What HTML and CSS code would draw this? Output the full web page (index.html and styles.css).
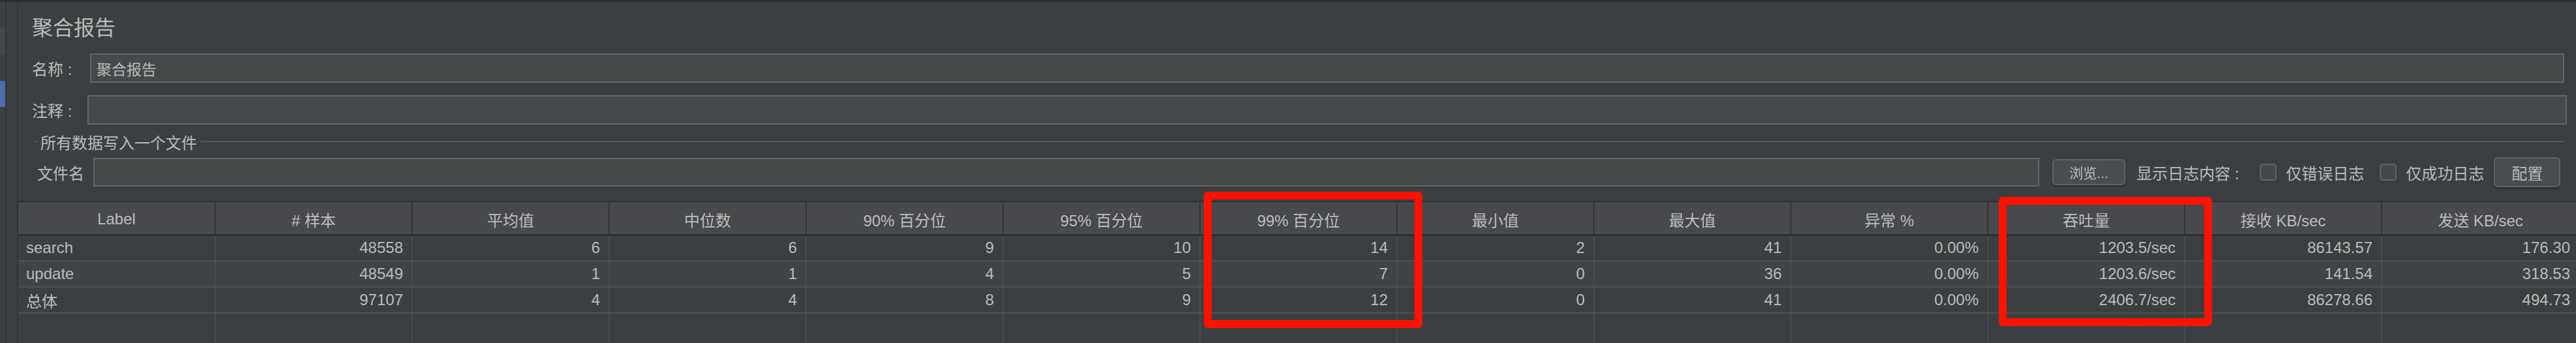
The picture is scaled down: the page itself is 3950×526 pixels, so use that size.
FILE: index.html
```html
<!DOCTYPE html>
<html lang="zh-CN">
<head>
<meta charset="utf-8">
<title>聚合报告</title>
<link rel="stylesheet" href="styles.css">
</head>
<body>
<div class="app">
  <div class="topbar"></div>
  <div class="workspace">
    <aside class="tree">
      <div class="tree-row"></div>
      <div class="tree-row hover"></div>
      <div class="tree-row"></div>
      <div class="tree-row selected"></div>
    </aside>
    <div class="gutter"></div>
    <main class="panel">
      <h1 class="title">聚合报告</h1>
      <div class="field field-name">
        <label class="field-label">名称 :</label>
        <div class="input">聚合报告</div>
      </div>
      <div class="field field-comment">
        <label class="field-label">注释 :</label>
        <div class="input"></div>
      </div>
      <div class="group-title">
        <span class="group-tick"></span>
        <span class="group-text">所有数据写入一个文件</span>
        <span class="group-line"></span>
      </div>
      <div class="file-row">
        <label class="file-label">文件名</label>
        <div class="input file-input"></div>
        <button class="btn btn-browse">浏览...</button>
        <span class="log-label">显示日志内容 :</span>
        <span class="check"><span class="box"></span>仅错误日志</span>
        <span class="check"><span class="box"></span>仅成功日志</span>
        <button class="btn btn-config">配置</button>
      </div>
      <table class="grid">
        <thead>
          <tr>
            <th>Label</th><th># 样本</th><th>平均值</th><th>中位数</th><th>90% 百分位</th><th>95% 百分位</th><th>99% 百分位</th><th>最小值</th><th>最大值</th><th>异常 %</th><th>吞吐量</th><th>接收 KB/sec</th><th>发送 KB/sec</th>
          </tr>
        </thead>
        <tbody>
          <tr>
            <td class="txt">search</td><td>48558</td><td>6</td><td>6</td><td>9</td><td>10</td><td>14</td><td>2</td><td>41</td><td>0.00%</td><td>1203.5/sec</td><td>86143.57</td><td>176.30</td>
          </tr>
          <tr class="alt">
            <td class="txt">update</td><td>48549</td><td>1</td><td>1</td><td>4</td><td>5</td><td>7</td><td>0</td><td>36</td><td>0.00%</td><td>1203.6/sec</td><td>141.54</td><td>318.53</td>
          </tr>
          <tr>
            <td class="txt">总体</td><td>97107</td><td>4</td><td>4</td><td>8</td><td>9</td><td>12</td><td>0</td><td>41</td><td>0.00%</td><td>2406.7/sec</td><td>86278.66</td><td>494.73</td>
          </tr>
          <tr class="filler">
            <td></td><td></td><td></td><td></td><td></td><td></td><td></td><td></td><td></td><td></td><td></td><td></td><td></td>
          </tr>
        </tbody>
      </table>
    </main>
  </div>
  <div class="mark mark-p99"></div>
  <div class="mark mark-tps"></div>
</div>
</body>
</html>
```

FILE: styles.css
```css
* { box-sizing: border-box; }
html, body { margin: 0; padding: 0; }
body {
  width: 3950px;
  height: 526px;
  overflow: hidden;
  background: #3c3f41;
  color: #bbbbbb;
  font-family: "Liberation Sans", "Noto Sans CJK SC", sans-serif;
  font-size: 24px;
}
.app {
  position: relative;
  width: 3950px;
  height: 526px;
  overflow: hidden;
}
.topbar {
  height: 3px;
  background: #2c2e2f;
}
.workspace {
  display: flex;
  height: 523px;
}
.tree {
  width: 8px;
  background: #3d4042;
  display: flex;
  flex-direction: column;
}
.tree-row { height: 40px; }
.tree-row:first-child { height: 41px; }
.tree-row.hover { background: #45484a; }
.tree-row.selected { background: #4b6eaf; }
.gutter {
  width: 20px;
  border-left: 2px solid #323436;
  border-right: 2px solid #323436;
  background: #3c3f41;
}
.panel {
  flex: 1;
  min-width: 0;
  display: flex;
  flex-direction: column;
}
.title {
  margin: 20px 0 0 21px;
  font-size: 32px;
  font-weight: normal;
  line-height: 40px;
  height: 40px;
}
.field {
  display: flex;
  align-items: center;
  margin-top: 19px;
  padding-left: 21px;
}
.field-label { white-space: nowrap; }
.field-name .field-label { width: 89px; }
.field-comment .field-label { width: 85px; }
.input {
  height: 45px;
  background: #45494a;
  border: 2px solid #636567;
  padding-left: 8px;
  display: flex;
  align-items: center;
  font-size: 23px;
}
.field-name .input { width: 3794px; }
.field-comment .input { width: 3802px; }
.group-title {
  display: flex;
  align-items: center;
  height: 26px;
  margin-top: 13px;
  padding-left: 25px;
  width: 3904px;
}
.group-tick {
  width: 6px;
  height: 2px;
  background: #55585a;
  margin-right: 3px;
}
.group-text { font-size: 24px; white-space: nowrap; }
.group-line {
  flex: 1;
  height: 2px;
  background: #55585a;
  margin-left: 6px;
}
.file-row {
  display: flex;
  align-items: center;
  margin-top: 11px;
  padding-left: 29px;
  height: 46px;
  white-space: nowrap;
}
.file-label { width: 86px; }
.file-input {
  width: 2984px;
  height: 44px;
}
.btn {
  font-family: inherit;
  color: #bbbbbb;
  background: #494d4f;
  border: 2px solid #5e6264;
  border-radius: 6px;
  box-shadow: 0 3px 2px #2f3133;
  padding: 0;
}
.btn-browse {
  width: 112px;
  height: 40px;
  margin-left: 20px;
  font-size: 21px;
}
.log-label { margin-left: 17px; }
.check {
  display: flex;
  align-items: center;
  margin-left: 32px;
}
.check + .check { margin-left: 24px; }
.box {
  width: 26px;
  height: 26px;
  border: 2px solid #5e6264;
  border-radius: 5px;
  background: #43484a;
  margin-right: 14px;
}
.btn-config {
  width: 102px;
  height: 46px;
  margin-left: 15px;
  font-size: 24px;
}
.grid {
  margin-top: 21px;
  border-collapse: collapse;
  table-layout: fixed;
  width: 3926px;
  font-size: 24px;
}
.grid th {
  width: 302px;
  height: 51px;
  background: #47494c;
  font-weight: normal;
  color: #bdbdbd;
  border-top: 2px solid #2e3032;
  border-bottom: 3px solid #2e3032;
  border-left: 2px solid #323436;
  padding: 4px 0 0;
  text-align: center;
}
.grid th:first-child { border-left: 0; }
.grid td {
  height: 40px;
  padding: 0 13px 0 12px;
  text-align: right;
  background: #3c3f41;
  border-bottom: 2px solid #4f5254;
  border-left: 2px solid #4a4d4f;
  white-space: nowrap;
}
.grid td:first-child { border-left: 0; }
.grid td.txt { text-align: left; }
.grid tr.alt td { background: #404446; }
.grid tr.filler td { height: 60px; border-bottom: 0; }
.mark {
  position: absolute;
  border: 12px solid #ff1100;
  border-radius: 6px;
}
.mark-p99 {
  left: 1846px;
  top: 294px;
  width: 335px;
  height: 209px;
}
.mark-tps {
  left: 3065px;
  top: 302px;
  width: 327px;
  height: 198px;
}
```
